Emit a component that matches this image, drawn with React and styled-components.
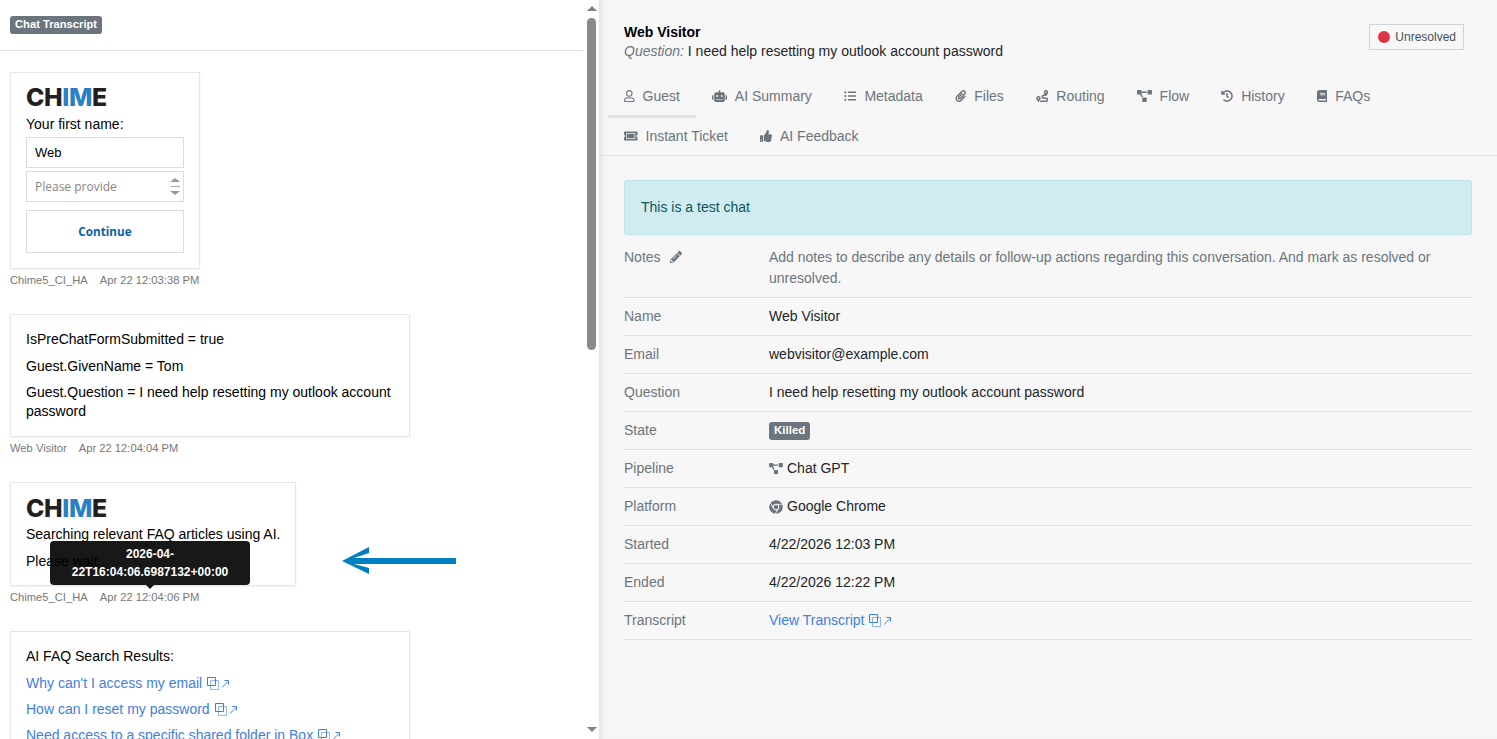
import React from "react";
import styled, {createGlobalStyle} from "styled-components";
import {
	FaBook,
	FaChrome,
	FaHistory,
	FaListUl,
	FaPaperclip,
	FaPencilAlt,
	FaProjectDiagram,
	FaRegUser,
	FaRobot,
	FaRoute,
	FaThumbsUp,
	FaTicketAlt
} from "react-icons/fa";

const Global = createGlobalStyle`
	html, body {
		margin: 0;
		height: 100%;
		overflow: hidden;
	}
	body {
		color: #000;
		font-family: "Liberation Sans", Arial, sans-serif;
		font-size: 14px;
		line-height: 19px;
	}
	* {
		box-sizing: border-box;
	}
`;

const Page = styled.div`
	display: flex;
	height: 739px;
	background: #fff;
`;

// Left pane
const TranscriptPane = styled.div`
	display: flex;
	flex: 0 0 599px;
	height: 100%;
`;

const TranscriptContent = styled.div`
	position: relative;
	flex: 1;
	overflow: hidden;
`;

const ScrollRail = styled.div`
	display: flex;
	flex: 0 0 15px;
	flex-direction: column;
	align-items: center;
	padding: 6px 0 7px;
`;

const ScrollUp = styled.span`
	border-right: 5px solid transparent;
	border-bottom: 5px solid #808080;
	border-left: 5px solid transparent;
`;

const ScrollThumb = styled.span`
	width: 9px;
	height: 332px;
	margin-top: 7px;
	border-radius: 5px;
	background: #8a8a8a;
`;

const ScrollDown = styled.span`
	margin-top: auto;
	border-top: 5px solid #808080;
	border-right: 5px solid transparent;
	border-left: 5px solid transparent;
`;

const PaneHeader = styled.div`
	display: flex;
	align-items: flex-start;
	height: 51px;
	padding: 16px 0 0 10px;
	border-bottom: 1px solid #dee2e6;
`;

const Badge = styled.span`
	display: inline-block;
	padding: 0 5px 1px;
	border-radius: 3px;
	background: #6c757d;
	color: #fff;
	font-size: ${(props) => props.$size || 11.2}px;
	font-weight: 700;
	line-height: 17px;
`;

const Messages = styled.div`
	display: flex;
	flex-direction: column;
	gap: 27px;
	padding: 21px 0 0 10px;
`;

const Message = styled.div`
	position: relative;
`;

const Bubble = styled.div`
	width: ${(props) => props.$width}px;
	padding: ${(props) => props.$pad || "15px 10px 15px 15px"};
	border: 1px solid #e6e6e6;
	box-shadow: 0 1px 2px rgba(0, 0, 0, 0.06);
	background: #fff;
`;

const Line = styled.p`
	margin: 0 0 ${(props) => props.$gap || 7.5}px;

	&:last-child {
		margin-bottom: 0;
	}
`;

const Logo = styled.div`
	height: 18px;
	margin-bottom: ${(props) => props.$gap || 9}px;
	color: #231f20;
	font-family: Inter, "Liberation Sans", sans-serif;
	font-size: 24.8px;
	font-weight: 800;
	letter-spacing: -0.4px;
	line-height: 18px;
`;

const LogoAccent = styled.span`
	color: #2a80c4;
`;

const FieldLabel = styled.div`
	margin-bottom: 3px;
`;

const Field = styled.div`
	display: flex;
	align-items: center;
	width: 158px;
	height: 31px;
	margin-bottom: 3px;
	padding: 0 3px 0 8px;
	border: 1px solid #dcdcdc;
	background: #fff;
	color: ${(props) => (props.$placeholder ? "#858585" : "#000")};
	font-family: ${(props) => (props.$placeholder ? `"Open Sans"` : `"Liberation Sans"`)}, sans-serif;
	font-size: ${(props) => (props.$placeholder ? 12 : 13)}px;
`;

const FieldText = styled.span`
	flex: 1;
`;

const Spinner = styled.span`
	display: flex;
	flex-direction: column;
	align-items: center;
	gap: 4px;
	width: 10px;
`;

const SpinUp = styled.span`
	border-right: 5px solid transparent;
	border-bottom: 4px solid #999;
	border-left: 5px solid transparent;
`;

const SpinRule = styled.span`
	width: 9px;
	height: 1px;
	background: #aaa;
`;

const SpinDown = styled.span`
	border-top: 4px solid #999;
	border-right: 5px solid transparent;
	border-left: 5px solid transparent;
`;

const ContinueButton = styled.div`
	display: flex;
	align-items: center;
	justify-content: center;
	width: 158px;
	height: 43px;
	margin-top: 8px;
	border: 1px solid #dcdcdc;
	color: #0a62a9;
	font-family: "Open Sans", sans-serif;
	font-size: 11.7px;
	font-weight: 700;
`;

const Meta = styled.div`
	display: flex;
	gap: 12px;
	margin-top: 5px;
	color: #777;
	font-size: 11.2px;
	line-height: 13px;
`;

const Tooltip = styled.div`
	position: absolute;
	top: 59px;
	left: 40px;
	width: 200px;
	padding: 4px 8px;
	border-radius: 4px;
	background: #000;
	color: #fff;
	font-size: 12px;
	font-weight: 700;
	line-height: 18px;
	opacity: 0.9;
	text-align: center;

	&::after {
		content: "";
		position: absolute;
		bottom: -4px;
		left: 96px;
		border-top: 4px solid #000;
		border-right: 4px solid transparent;
		border-left: 4px solid transparent;
	}
`;

const Annotation = styled.svg`
	position: absolute;
	top: 547px;
	left: 342px;
`;

const LinkLine = styled.a`
	display: block;
	margin-bottom: 7px;
	color: #3f7ee0;
	text-decoration: none;
`;

const ExternalGlyph = styled.svg`
	margin-left: 5px;
	vertical-align: -2px;
`;

const External = () => (
	<ExternalGlyph width="23" height="13" viewBox="0 0 23 13" fill="none" stroke="currentColor" strokeWidth="1">
		<path d="M.5 .5h8v8h-8z" />
		<path d="M3.500 3.500h8v9h-8z" opacity="0.55" />
		<path d="M15 10.500l6-6M17.500 3.500H21.500V7.500" />
	</ExternalGlyph>
);

// Right pane
const DetailPane = styled.div`
	flex: 1;
	height: 100%;
	background: #f7f7f7;
	box-shadow: inset 6px 0 6px -4px #dcdcdc;
`;

const DetailHeader = styled.div`
	display: flex;
	justify-content: space-between;
	align-items: flex-start;
	height: 76px;
	padding: 23px 33px 0 25px;
`;

const Title = styled.div`
	font-weight: 700;
`;

const Question = styled.div`
	color: #212529;
`;

const QuestionLabel = styled.em`
	color: #6c757d;
`;

const StateButton = styled.div`
	display: flex;
	align-items: center;
	gap: 5px;
	height: 26px;
	margin-top: 1px;
	padding: 0 7px 0 8px;
	border: 1px solid #ced4da;
	color: #495057;
	font-size: 12px;
`;

const StateDot = styled.span`
	width: 12px;
	height: 12px;
	border-radius: 50%;
	background: #dc3545;
`;

const Tabs = styled.div`
	display: flex;
	flex-wrap: wrap;
	align-content: flex-start;
	height: 80px;
	padding: 0 9px;
	border-bottom: 1px solid #dee2e6;
`;

const Tab = styled.div`
	display: flex;
	align-items: center;
	gap: 8px;
	height: 42px;
	margin-top: ${(props) => (props.$lower ? -2 : 0)}px;
	padding: 1px 16px 0;
	border-bottom: 3px solid ${(props) => (props.$active ? "#dee2e6" : "transparent")};
	color: #6c757d;

	svg {
		width: ${(props) => props.$iconWidth}px;
		height: 12px;
	}
`;

const TabBreak = styled.div`
	flex: 0 0 100%;
`;

const DetailBody = styled.div`
	padding: 24px 25px 0;
`;

const Alert = styled.div`
	height: 55px;
	margin-bottom: 4px;
	padding: 17px 16px;
	border: 1px solid #bee5eb;
	border-radius: 3px;
	background: #d1ecf1;
	color: #0c5460;
	line-height: 19px;
`;

const Row = styled.div`
	display: grid;
	grid-template-columns: 145px 1fr;
	padding: 8px 0;
	border-bottom: 1px solid #dee2e6;
	line-height: 21px;
`;

const RowLabel = styled.div`
	display: flex;
	align-items: flex-start;
	gap: 9px;
	color: #6c757d;

	svg {
		margin-top: 4px;
		font-size: 12px;
	}
`;

const RowValue = styled.div`
	display: flex;
	align-items: center;
	gap: 4px;
	min-height: 21px;
	color: ${(props) => (props.$muted ? "#6c757d" : "#212529")};

	> svg {
		width: 14px;
		height: ${(props) => props.$iconSize || 14}px;
		color: #6c757d;
	}
`;

const TranscriptLink = styled.a`
	color: #3f7ee0;
	text-decoration: none;
`;

const tabs = [
	{label: "Guest", icon: FaRegUser, width: 10.5, active: true},
	{label: "AI Summary", icon: FaRobot, width: 15},
	{label: "Metadata", icon: FaListUl, width: 12.5},
	{label: "Files", icon: FaPaperclip, width: 11.5},
	{label: "Routing", icon: FaRoute, width: 12.5},
	{label: "Flow", icon: FaProjectDiagram, width: 15},
	{label: "History", icon: FaHistory, width: 12},
	{label: "FAQs", icon: FaBook, width: 10.5}
];

const lowerTabs = [
	{label: "Instant Ticket", icon: FaTicketAlt, width: 13.5},
	{label: "AI Feedback", icon: FaThumbsUp, width: 12}
];

const rows = [
	{label: "Name", value: "Web Visitor"},
	{label: "Email", value: "webvisitor@example.com"},
	{label: "Question", value: "I need help resetting my outlook account password"},
	{label: "State", value: <Badge $size={11.5}>Killed</Badge>},
	{label: "Pipeline", iconSize: 11, value: <><FaProjectDiagram />Chat GPT</>},
	{label: "Platform", value: <><FaChrome />Google Chrome</>},
	{label: "Started", value: "4/22/2026 12:03 PM"},
	{label: "Ended", value: "4/22/2026 12:22 PM"},
	{label: "Transcript", value: <TranscriptLink href="#">View Transcript<External /></TranscriptLink>}
];

const ChimeLogo = ({gap}) => (
	<Logo $gap={gap}>CH<LogoAccent>IM</LogoAccent>E</Logo>
);

export default function App() {
	return (
		<Page>
			<Global />
			<TranscriptPane>
				<TranscriptContent>
					<PaneHeader>
						<Badge>Chat Transcript</Badge>
					</PaneHeader>
					<Messages>
						<Message>
							<Bubble $width={190}>
								<ChimeLogo />
								<FieldLabel>Your first name:</FieldLabel>
								<Field>
									<FieldText>Web</FieldText>
								</Field>
								<Field $placeholder>
									<FieldText>Please provide</FieldText>
									<Spinner>
										<SpinUp />
										<SpinRule />
										<SpinDown />
									</Spinner>
								</Field>
								<ContinueButton>Continue</ContinueButton>
							</Bubble>
							<Meta>
								<span>Chime5_CI_HA</span>
								<span>Apr 22 12:03:38 PM</span>
							</Meta>
						</Message>
						<Message>
							<Bubble $width={400}>
								<Line>IsPreChatFormSubmitted = true</Line>
								<Line>Guest.GivenName = Tom</Line>
								<Line>Guest.Question = I need help resetting my outlook account password</Line>
							</Bubble>
							<Meta>
								<span>Web Visitor</span>
								<span>Apr 22 12:04:04 PM</span>
							</Meta>
						</Message>
						<Message>
							<Bubble $width={286} $pad="16px 10px 14px 15px">
								<ChimeLogo gap={8} />
								<Line $gap={8}>Searching relevant FAQ articles using AI.</Line>
								<Line>Please wait...</Line>
							</Bubble>
							<Tooltip>2026-04-22T16:04:06.6987132+00:00</Tooltip>
							<Meta>
								<span>Chime5_CI_HA</span>
								<span>Apr 22 12:04:06 PM</span>
							</Meta>
						</Message>
						<Message>
							<Bubble $width={400}>
								<Line $gap={8}>AI FAQ Search Results:</Line>
								<LinkLine href="#">Why can't I access my email<External /></LinkLine>
								<LinkLine href="#">How can I reset my password<External /></LinkLine>
								<LinkLine href="#">Need access to a specific shared folder in Box<External /></LinkLine>
							</Bubble>
						</Message>
					</Messages>
					<Annotation width="114" height="27" viewBox="0 0 114 27" fill="#0080c0">
						<path d="M0 14L27 0V6L12 11H114V17H12L27 21V27Z" />
					</Annotation>
				</TranscriptContent>
				<ScrollRail>
					<ScrollUp />
					<ScrollThumb />
					<ScrollDown />
				</ScrollRail>
			</TranscriptPane>
			<DetailPane>
				<DetailHeader>
					<div>
						<Title>Web Visitor</Title>
						<Question><QuestionLabel>Question:</QuestionLabel> I need help resetting my outlook account password</Question>
					</div>
					<StateButton>
						<StateDot />
						Unresolved
					</StateButton>
				</DetailHeader>
				<Tabs>
					{tabs.map(({label, icon: Icon, width, active}) => (
						<Tab key={label} $active={active} $iconWidth={width}><Icon />{label}</Tab>
					))}
					<TabBreak />
					{lowerTabs.map(({label, icon: Icon, width}) => (
						<Tab key={label} $lower $iconWidth={width}><Icon />{label}</Tab>
					))}
				</Tabs>
				<DetailBody>
					<Alert>This is a test chat</Alert>
					<Row>
						<RowLabel>Notes<FaPencilAlt /></RowLabel>
						<RowValue $muted>Add notes to describe any details or follow-up actions regarding this conversation. And mark as resolved or unresolved.</RowValue>
					</Row>
					{rows.map((row) => (
						<Row key={row.label}>
							<RowLabel>{row.label}</RowLabel>
							<RowValue $iconSize={row.iconSize}>{row.value}</RowValue>
						</Row>
					))}
				</DetailBody>
			</DetailPane>
		</Page>
	);
}
